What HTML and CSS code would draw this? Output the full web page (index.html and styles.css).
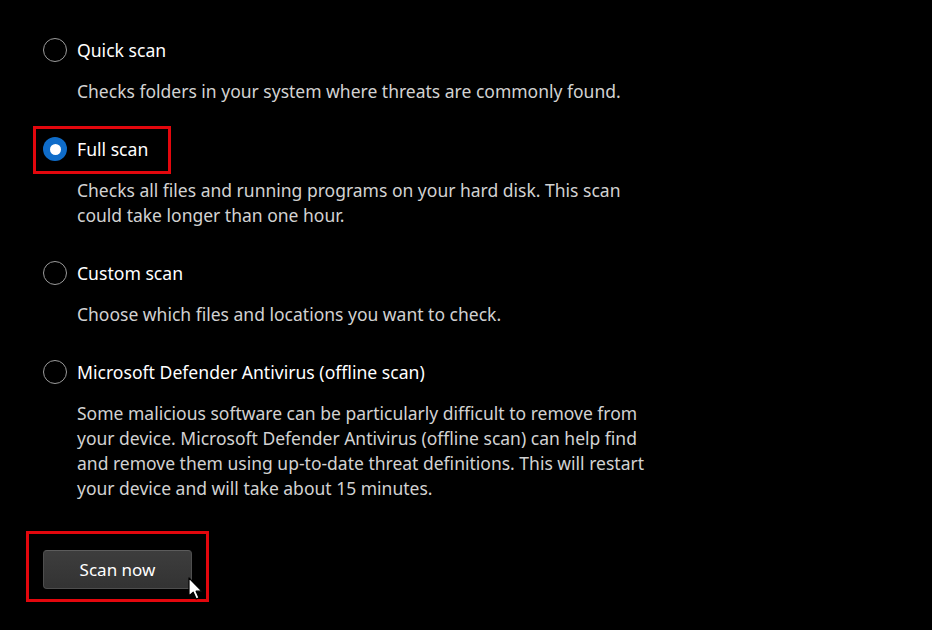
FILE: index.html
```html
<!DOCTYPE html>
<html lang="en">
<head>
<meta charset="utf-8">
<link rel="stylesheet" href="styles.css">
</head>
<body>
<main class="scan-options">
  <section class="option">
    <div class="option-title">
      <span class="radio"></span>
      <span class="label">Quick scan</span>
    </div>
    <p class="desc">Checks folders in your system where threats are commonly found.</p>
  </section>

  <section class="option">
    <div class="option-title highlight">
      <span class="radio checked"></span>
      <span class="label">Full scan</span>
    </div>
    <p class="desc">Checks all files and running programs on your hard disk. This scan<br>could take longer than one hour.</p>
  </section>

  <section class="option">
    <div class="option-title">
      <span class="radio"></span>
      <span class="label">Custom scan</span>
    </div>
    <p class="desc">Choose which files and locations you want to check.</p>
  </section>

  <section class="option">
    <div class="option-title">
      <span class="radio"></span>
      <span class="label">Microsoft Defender Antivirus (offline scan)</span>
    </div>
    <p class="desc">Some malicious software can be particularly difficult to remove from<br>your device. Microsoft Defender Antivirus (offline scan) can help find<br>and remove them using up-to-date threat definitions. This will restart<br>your device and will take about 15 minutes.</p>
  </section>

  <div class="action">
    <button class="scan-btn" type="button">Scan now</button>
    <svg class="cursor" width="16" height="24" viewBox="0 0 16 24" aria-hidden="true">
      <path d="M1 1 L1 19 L5.2 15.2 L8.2 22 L11 20.8 L8.1 14.2 L13.8 14.2 Z" fill="#fff" stroke="#000" stroke-width="1.2" stroke-linejoin="round"/>
    </svg>
  </div>
</main>
</body>
</html>
```

FILE: styles.css
```css
html, body {
  margin: 0;
  padding: 0;
  background: #000;
}

body {
  font-family: "Noto Sans", "Open Sans", "Liberation Sans", sans-serif;
  color: #fff;
  width: 932px;
  height: 630px;
  overflow: hidden;
}

.scan-options {
  padding: 38px 0 0 43px;
  display: flex;
  flex-direction: column;
}

.option {
  margin-bottom: 33px;
}

.option-title {
  display: flex;
  width: max-content;
  align-items: center;
  height: 24px;
  position: relative;
}

.radio {
  width: 24px;
  height: 24px;
  box-sizing: border-box;
  border: 1.5px solid #9b9b9b;
  border-radius: 50%;
  margin-right: 10px;
  display: inline-flex;
  align-items: center;
  justify-content: center;
}

.radio.checked {
  border: none;
  background: #0f6cc9;
}

.radio.checked::before {
  content: "";
  width: 11px;
  height: 11px;
  border-radius: 50%;
  background: #fff;
}

.label {
  font-size: 17.6px;
  line-height: 24px;
  color: #fff;
}

.desc {
  margin: 17px 0 0 34px;
  font-size: 17.5px;
  line-height: 25px;
  color: #d2d2d2;
}

.highlight::after {
  content: "";
  position: absolute;
  left: -10px;
  top: -11px;
  width: 138px;
  height: 48px;
  box-sizing: border-box;
  border: 3px solid #e3070d;
}

.action {
  position: relative;
  align-self: flex-start;
  margin-top: 16px;
}

.action::after {
  content: "";
  position: absolute;
  left: -17px;
  top: -19px;
  width: 183px;
  height: 71px;
  box-sizing: border-box;
  border: 3px solid #e3070d;
}

.scan-btn {
  display: block;
  width: 149px;
  height: 39px;
  border-radius: 4px;
  border: 1px solid #4e4e4e;
  border-top-color: #5c5c5c;
  background: linear-gradient(#3d3d3d, #333);
  color: #fff;
  font-family: "Noto Sans", "Open Sans", "Liberation Sans", sans-serif;
  font-size: 17px;
  padding: 0;
}

.cursor {
  position: absolute;
  left: 145px;
  top: 27px;
  z-index: 2;
}
```
